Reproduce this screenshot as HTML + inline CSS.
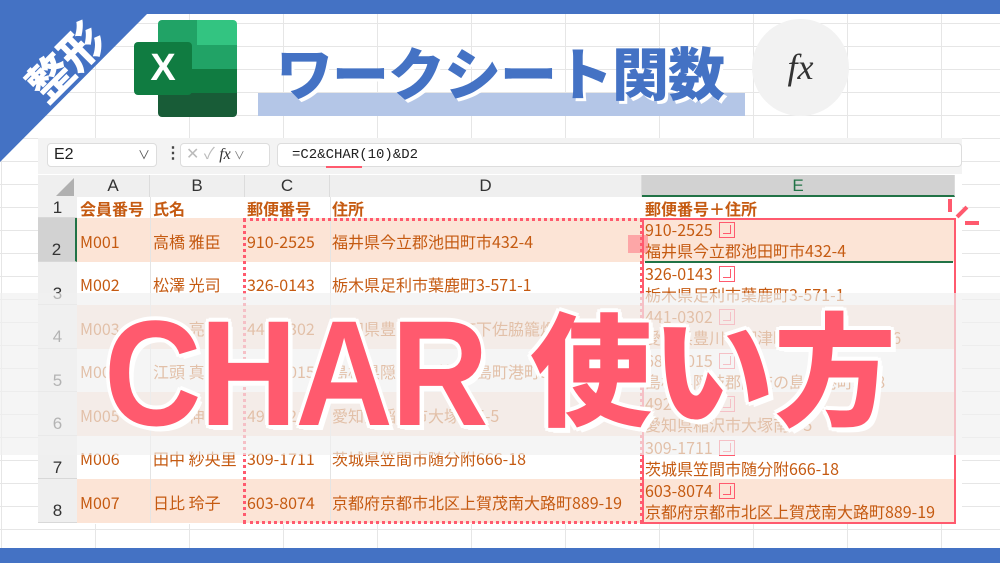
<!DOCTYPE html>
<html><head><meta charset="utf-8"><style>
*{margin:0;padding:0;box-sizing:border-box}
body{width:1000px;height:563px;overflow:hidden;position:relative;background:#fff;font-family:"Liberation Sans","Noto Sans CJK JP",sans-serif}
.abs{position:absolute}
.grid{position:absolute;left:0;top:0;width:1000px;height:563px;
background-image:linear-gradient(#e6e6e6 1px,transparent 1px),linear-gradient(90deg,#e6e6e6 1px,transparent 1px);
background-size:94px 23px;background-position:1px 0px}
.cell{position:absolute;color:#c55a11;font-size:16px;line-height:22px;white-space:nowrap;font-family:"Noto Sans CJK JP",sans-serif}
.rh{position:absolute;left:38px;width:39px;background:#efefef;color:#333;font-size:17px;text-align:center;border-bottom:1px solid #d8d8d8}
.ch{position:absolute;top:175px;height:22px;background:#efefef;color:#333;font-size:17px;text-align:center;line-height:22px;border-right:1px solid #dcdcdc}
.ret{display:inline-block;width:16px;height:16px;border:1.5px solid #ff5a6e;vertical-align:-2px;margin-left:6px;position:relative}
.ret:after{content:"";position:absolute;left:3px;top:2px;width:7px;height:8px;border-right:1.5px solid #ff5a6e;border-bottom:1.5px solid #ff5a6e}
.big{position:absolute;color:#ff5a6e;font-weight:900;text-shadow:3px 3px 0 #fff,-3px -3px 0 #fff,3px -3px 0 #fff,-3px 3px 0 #fff,4px 0 0 #fff,-4px 0 0 #fff,0 4px 0 #fff,0 -4px 0 #fff,5px 5px 0 #fff}
</style></head><body>
<div class="grid"></div>
<div class="abs" style="left:0;top:0;width:1000px;height:14px;background:#4472c4"></div>
<div class="abs" style="left:0;top:548px;width:1000px;height:15px;background:#4472c4"></div>
<svg class="abs" style="left:0;top:0" width="160" height="170"><polygon points="0,0 147,0 147,14 0,162" fill="#4472c4"/></svg>
<div class="abs" style="left:20px;top:38px;color:#fff;font-weight:900;font-size:44px;transform:rotate(-45deg);font-family:'Noto Sans CJK JP',sans-serif;line-height:1">整形</div>
<div class="abs" style="left:158px;top:20px;width:79px;height:97px;border-radius:4px;overflow:hidden">
<div class="abs" style="left:0;top:0;width:39px;height:25px;background:#21a366"></div>
<div class="abs" style="left:39px;top:0;width:40px;height:25px;background:#33c481"></div>
<div class="abs" style="left:0;top:25px;width:79px;height:24px;background:#21a366"></div>
<div class="abs" style="left:0;top:49px;width:79px;height:24px;background:#107c41"></div>
<div class="abs" style="left:0;top:73px;width:79px;height:24px;background:#185c37"></div>
</div>
<div class="abs" style="left:134px;top:42px;width:58px;height:53px;background:#107c41;border-radius:4px;color:#fff;font-size:38px;text-align:center;line-height:53px;font-weight:bold">X</div>
<div class="abs" style="left:258px;top:93px;width:487px;height:23px;background:#b4c6e7"></div>
<div class="abs" style="left:276px;top:34px;color:#4472c4;font-size:57px;font-weight:900;font-family:'Noto Sans CJK JP',sans-serif;line-height:1.3;letter-spacing:-1px;text-shadow:3px 3px 0 #fff">ワークシート関数</div>
<div class="abs" style="left:752px;top:19px;width:97px;height:97px;border-radius:50%;background:#f2f2f2;text-align:center;line-height:97px;font-family:'Liberation Serif',serif;font-style:italic;font-size:36px;color:#333">fx</div>
<div class="abs" style="left:38px;top:138px;width:924px;height:36px;background:#f3f3f3"></div>
<div class="abs" style="left:47px;top:143px;width:110px;height:24px;background:#fff;border:1px solid #ddd;border-radius:4px;font-size:16px;line-height:22px;padding-left:6px;color:#222">E2<span style="position:absolute;right:6px;color:#555;font-size:12px">&#x2228;</span></div>
<div class="abs" style="left:165px;top:143px;font-size:16px;color:#444;font-weight:bold">&#8942;</div>
<div class="abs" style="left:180px;top:143px;width:90px;height:24px;background:#fff;border:1px solid #ddd;border-radius:4px;font-size:16px;line-height:22px;color:#bbb;padding-left:5px">&#x2715; &#x2713; <span style="font-family:'Liberation Serif',serif;font-style:italic;color:#333">fx</span><span style="font-size:11px;color:#777"> &#x2228;</span></div>
<div class="abs" style="left:277px;top:143px;width:685px;height:24px;background:#fff;border:1px solid #ddd;border-radius:4px;font-family:'Liberation Mono',monospace;font-size:14px;line-height:22px;padding-left:14px;color:#222">=C2&amp;CHAR(10)&amp;D2</div>
<div class="abs" style="left:326px;top:166px;width:36px;height:2px;background:#ff5a6e"></div>
<div class="abs" style="left:38px;top:174px;width:924px;height:350px;background:#fff"></div>
<div class="abs" style="left:38px;top:175px;width:39px;height:22px;background:#efefef"></div>
<svg class="abs" style="left:56px;top:178px" width="18" height="18"><polygon points="18,0 18,18 0,18" fill="#b0b0b0"/></svg>
<div class="ch" style="left:77px;width:73px">A</div>
<div class="ch" style="left:150px;width:95px">B</div>
<div class="ch" style="left:245px;width:85px">C</div>
<div class="ch" style="left:330px;width:312px">D</div>
<div class="ch" style="left:642px;width:313px;background:#d2d2d2;color:#217346;border-bottom:2px solid #217346">E</div>
<div class="abs" style="left:77px;top:218px;width:878px;height:44px;background:#fce4d6"></div>
<div class="abs" style="left:77px;top:305px;width:878px;height:44px;background:#fce4d6"></div>
<div class="abs" style="left:77px;top:392px;width:878px;height:44px;background:#fce4d6"></div>
<div class="abs" style="left:77px;top:479px;width:878px;height:44px;background:#fce4d6"></div>
<div class="abs" style="left:150px;top:197px;width:1px;height:326px;background:#e4e4e4"></div>
<div class="abs" style="left:330px;top:197px;width:1px;height:326px;background:#e4e4e4"></div>
<div class="rh" style="top:197px;height:21px;line-height:22px">1</div>
<div class="rh" style="top:218px;height:44px;line-height:64px;background:#d2d2d2;border-right:2px solid #217346">2</div>
<div class="rh" style="top:262px;height:43px;line-height:64px">3</div>
<div class="rh" style="top:305px;height:44px;line-height:64px">4</div>
<div class="rh" style="top:349px;height:43px;line-height:64px">5</div>
<div class="rh" style="top:392px;height:44px;line-height:64px">6</div>
<div class="rh" style="top:436px;height:43px;line-height:64px">7</div>
<div class="rh" style="top:479px;height:44px;line-height:64px">8</div>
<div class="cell" style="left:80px;top:197px;font-weight:bold">会員番号</div>
<div class="cell" style="left:153px;top:197px;font-weight:bold">氏名</div>
<div class="cell" style="left:247px;top:197px;font-weight:bold">郵便番号</div>
<div class="cell" style="left:332px;top:197px;font-weight:bold">住所</div>
<div class="cell" style="left:645px;top:197px;font-weight:bold">郵便番号＋住所</div>
<div class="cell" style="left:80px;top:230px">M001</div><div class="cell" style="left:153px;top:230px">高橋 雅臣</div><div class="cell" style="left:247px;top:230px">910-2525</div><div class="cell" style="left:332px;top:230px">福井県今立郡池田町市432-4</div>
<div class="cell" style="left:80px;top:273px">M002</div><div class="cell" style="left:153px;top:273px">松澤 光司</div><div class="cell" style="left:247px;top:273px">326-0143</div><div class="cell" style="left:332px;top:273px">栃木県足利市葉鹿町3-571-1</div>
<div class="cell" style="left:80px;top:317px">M003</div><div class="cell" style="left:153px;top:317px">鈴木 亮</div><div class="cell" style="left:247px;top:317px">441-0302</div><div class="cell" style="left:332px;top:317px">愛知県豊川市御津町下佐脇籠畑9-16</div>
<div class="cell" style="left:80px;top:360px">M004</div><div class="cell" style="left:153px;top:360px">江頭 真司</div><div class="cell" style="left:247px;top:360px">685-0015</div><div class="cell" style="left:332px;top:360px">島根県隠岐郡隠岐の島町港町3-18</div>
<div class="cell" style="left:80px;top:404px">M005</div><div class="cell" style="left:153px;top:404px">山田 伸浩</div><div class="cell" style="left:247px;top:404px">492-8217</div><div class="cell" style="left:332px;top:404px">愛知県稲沢市大塚南5-5</div>
<div class="cell" style="left:80px;top:447px">M006</div><div class="cell" style="left:153px;top:447px">田中 紗央里</div><div class="cell" style="left:247px;top:447px">309-1711</div><div class="cell" style="left:332px;top:447px">茨城県笠間市随分附666-18</div>
<div class="cell" style="left:80px;top:491px">M007</div><div class="cell" style="left:153px;top:491px">日比 玲子</div><div class="cell" style="left:247px;top:491px">603-8074</div><div class="cell" style="left:332px;top:491px">京都府京都市北区上賀茂南大路町889-19</div>
<div class="cell" style="left:645px;top:219px;line-height:21px">910-2525<span class="ret"></span><br>福井県今立郡池田町市432-4</div>
<div class="cell" style="left:645px;top:263px;line-height:21px">326-0143<span class="ret"></span><br>栃木県足利市葉鹿町3-571-1</div>
<div class="cell" style="left:645px;top:306px;line-height:21px">441-0302<span class="ret"></span><br>愛知県豊川市御津町下佐脇籠畑9-16</div>
<div class="cell" style="left:645px;top:350px;line-height:21px">685-0015<span class="ret"></span><br>島根県隠岐郡隠岐の島町港町3-18</div>
<div class="cell" style="left:645px;top:393px;line-height:21px">492-8217<span class="ret"></span><br>愛知県稲沢市大塚南5-5</div>
<div class="cell" style="left:645px;top:437px;line-height:21px">309-1711<span class="ret"></span><br>茨城県笠間市随分附666-18</div>
<div class="cell" style="left:645px;top:480px;line-height:21px">603-8074<span class="ret"></span><br>京都府京都市北区上賀茂南大路町889-19</div>
<div class="abs" style="left:645px;top:261px;width:308px;height:2px;background:#217346"></div>
<div class="abs" style="left:243px;top:218px;width:400px;height:306px;border:3px dotted #ff5a6e"></div>
<div class="abs" style="left:642px;top:218px;width:314px;height:306px;border:2.5px solid #ff5a6e"></div>
<div class="abs" style="left:628px;top:235px;width:20px;height:18px;background:rgba(255,90,110,0.45)"></div>
<div class="abs" style="left:948px;top:199px;width:4px;height:13px;background:#ff5a6e"></div>
<div class="abs" style="left:960px;top:205px;width:4px;height:14px;background:#ff5a6e;transform:rotate(45deg)"></div>
<div class="abs" style="left:965px;top:221px;width:14px;height:4px;background:#ff5a6e"></div>
<div class="abs" style="left:0;top:293px;width:1000px;height:162px;background:rgba(240,240,240,0.68)"></div>
<div class="big" style="left:104px;top:283px;font-size:150px;font-family:'Liberation Sans',sans-serif;line-height:1.2;transform:scaleX(0.9);transform-origin:left top;letter-spacing:-2px">CHAR</div>
<div class="big" style="left:530px;top:285px;font-size:122px;font-family:'Noto Sans CJK JP',sans-serif;line-height:1.3">使い方</div>
</body></html>
